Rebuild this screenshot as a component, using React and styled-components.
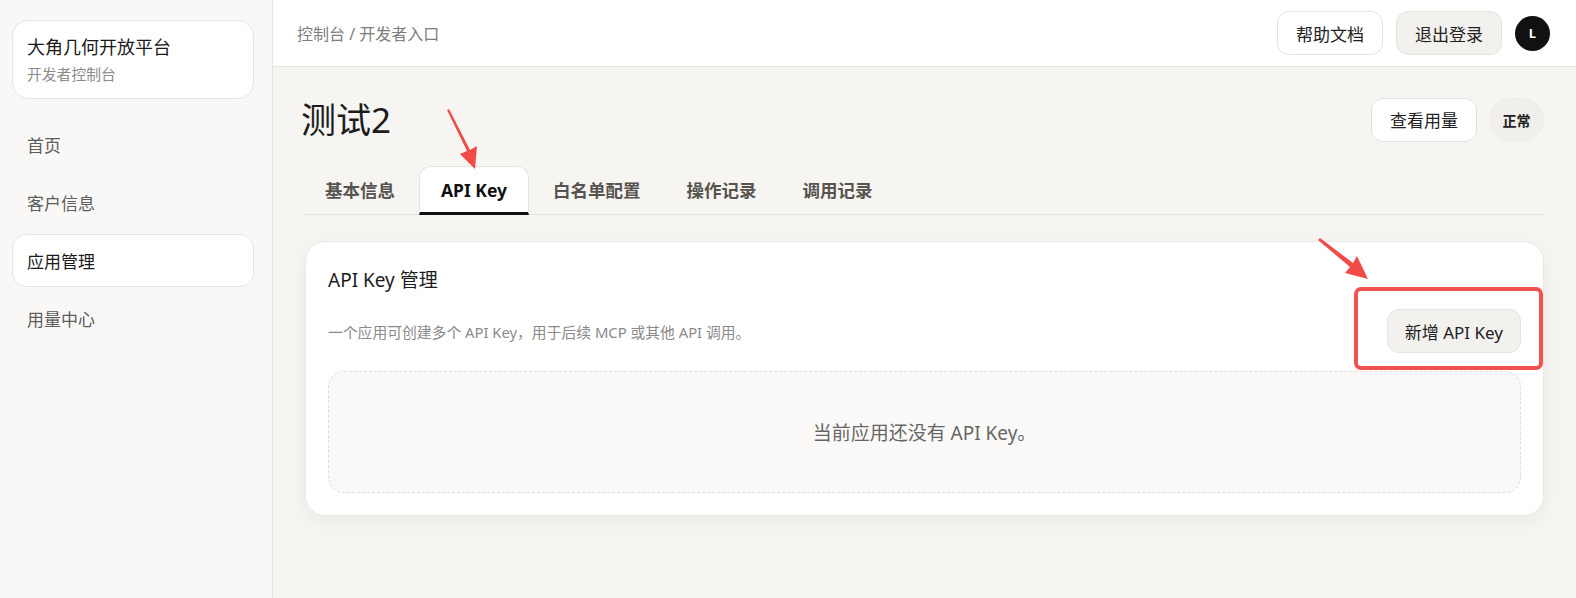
import React from "react";
import styled, { createGlobalStyle } from "styled-components";

const GlobalStyle = createGlobalStyle`
  html, body {
    margin: 0;
    padding: 0;
    background: #f6f5f2;
  }
  body {
    font-family: "Noto Sans", "Noto Sans CJK SC", sans-serif;
    color: #1c1c1c;
  }
  * {
    box-sizing: border-box;
  }
`;

const navItems = ["首页", "客户信息", "应用管理", "用量中心"];
const tabs = ["基本信息", "API Key", "白名单配置", "操作记录", "调用记录"];

export default function App() {
  return (
    <Page>
      <GlobalStyle />
      <Sidebar>
        <Brand>
          <BrandTitle>大角几何开放平台</BrandTitle>
          <BrandSub>开发者控制台</BrandSub>
        </Brand>
        <Nav>
          {navItems.map((item) => (
            <NavItem key={item} $active={item === "应用管理"}>
              {item}
            </NavItem>
          ))}
        </Nav>
      </Sidebar>

      <Main>
        <Header>
          <Crumbs>控制台 / 开发者入口</Crumbs>
          <HeaderActions>
            <Button>帮助文档</Button>
            <Button $muted>退出登录</Button>
            <Avatar>L</Avatar>
          </HeaderActions>
        </Header>

        <Content>
          <TitleRow>
            <PageTitle>测试2</PageTitle>
            <TitleActions>
              <Button>查看用量</Button>
              <Status>正常</Status>
            </TitleActions>
          </TitleRow>

          <Tabs>
            {tabs.map((tab) => (
              <Tab key={tab} $active={tab === "API Key"}>
                {tab}
              </Tab>
            ))}
          </Tabs>

          <Card>
            <CardTitle>API Key 管理</CardTitle>
            <CardRow>
              <CardDesc>
                一个应用可创建多个 API Key，用于后续 MCP 或其他 API 调用。
              </CardDesc>
              <Button $muted>新增 API Key</Button>
            </CardRow>
            <Empty>当前应用还没有 API Key。</Empty>
          </Card>
        </Content>
      </Main>

      {/* red annotation arrows and highlight box */}
      <Arrow style={{ left: 440, top: 106 }} width="46" height="66" viewBox="0 0 46 66">
        <polygon points="7,4 9,3 30,44 37,40 35,63 20,48 27,45" fill="#f04b47" />
      </Arrow>
      <Arrow style={{ left: 1314, top: 234 }} width="60" height="50" viewBox="0 0 60 50">
        <polygon points="4,6 6,4 39,29 43,22 54,45 31,39 36,33" fill="#f04b47" />
      </Arrow>
      <Highlight />
    </Page>
  );
}

const Page = styled.div`
  position: relative;
  display: flex;
  width: 100%;
  height: 598px;
  overflow: hidden;
`;

const Sidebar = styled.aside`
  width: 273px;
  flex-shrink: 0;
  background: #f9f8f6;
  border-right: 1px solid #e8e6e2;
  padding: 20px 18px 0 12px;
`;

const Brand = styled.div`
  background: #ffffff;
  border: 1px solid #e7e5e1;
  border-radius: 16px;
  padding: 13px 14px;
  height: 79px;
`;

const BrandTitle = styled.div`
  font-size: 18px;
  line-height: 26px;
  color: #1a1a1a;
`;

const BrandSub = styled.div`
  margin-top: 4px;
  font-size: 14.8px;
  line-height: 20px;
  color: #8c8c8c;
`;

const Nav = styled.nav`
  display: flex;
  flex-direction: column;
  gap: 5px;
  margin-top: 19px;
`;

const NavItem = styled.div`
  height: 53px;
  display: flex;
  align-items: center;
  padding-left: 14px;
  font-size: 17px;
  border-radius: 14px;
  border: 1px solid ${(p) => (p.$active ? "#e7e5e1" : "transparent")};
  background: ${(p) => (p.$active ? "#ffffff" : "transparent")};
  color: ${(p) => (p.$active ? "#1a1a1a" : "#5c5c5c")};
`;

const Main = styled.div`
  flex: 1;
  display: flex;
  flex-direction: column;
  min-width: 0;
`;

const Header = styled.header`
  height: 67px;
  flex-shrink: 0;
  background: #ffffff;
  border-bottom: 1px solid #e6e4e0;
  display: flex;
  align-items: center;
  justify-content: space-between;
  padding: 0 26px 0 24px;
`;

const Crumbs = styled.div`
  font-size: 16px;
  color: #7d7d7d;
`;

const HeaderActions = styled.div`
  display: flex;
  align-items: center;
  gap: 13px;
`;

const Button = styled.button`
  height: 44px;
  padding: 0 17px;
  min-width: 106px;
  border-radius: 12px;
  border: 1px solid #e5e3df;
  background: ${(p) => (p.$muted ? "#f2f1ee" : "#ffffff")};
  font-family: inherit;
  font-size: 17px;
  color: #222222;
  cursor: pointer;
`;

const Avatar = styled.div`
  width: 35px;
  height: 35px;
  border-radius: 50%;
  background: #111111;
  color: #ffffff;
  font-size: 13px;
  font-weight: 700;
  display: flex;
  align-items: center;
  justify-content: center;
`;

const Content = styled.main`
  padding: 30px 32px 0 32px;
  display: flex;
  flex-direction: column;
`;

const TitleRow = styled.div`
  display: flex;
  align-items: center;
  justify-content: space-between;
`;

const PageTitle = styled.h1`
  margin: 0 0 0 -4px;
  font-size: 35px;
  line-height: 44px;
  font-weight: 400;
  color: #1c1c1c;
`;

const TitleActions = styled.div`
  display: flex;
  align-items: center;
  gap: 12px;
`;

const Status = styled.div`
  width: 55px;
  height: 45px;
  border-radius: 999px;
  background: #f0efec;
  font-size: 14px;
  font-weight: 700;
  color: #222222;
  display: flex;
  align-items: center;
  justify-content: center;
`;

const Tabs = styled.div`
  margin-top: 24px;
  display: flex;
  gap: 2px;
  margin-left: -2px;
  border-bottom: 1px solid #e4e2de;
`;

const Tab = styled.div`
  height: 49px;
  padding: 0 21px;
  display: flex;
  align-items: center;
  margin-bottom: -1px;
  font-size: 17.5px;
  font-weight: 700;
  color: ${(p) => (p.$active ? "#111111" : "#57534e")};
  background: ${(p) => (p.$active ? "#ffffff" : "transparent")};
  border: 1px solid ${(p) => (p.$active ? "#e6e4e0" : "transparent")};
  border-bottom: 3px solid ${(p) => (p.$active ? "#111111" : "transparent")};
  border-radius: 12px 12px 0 0;
`;

const Card = styled.section`
  margin-top: 26px;
  background: #ffffff;
  border: 1px solid #ebe9e5;
  border-radius: 20px;
  box-shadow: 0 6px 22px rgba(0, 0, 0, 0.05);
  padding: 22px;
`;

const CardTitle = styled.h2`
  margin: 0;
  font-size: 19px;
  line-height: 32px;
  font-weight: 400;
  color: #1c1c1c;
`;

const CardRow = styled.div`
  margin-top: 13px;
  display: flex;
  align-items: center;
  justify-content: space-between;
`;

const CardDesc = styled.p`
  margin: 0;
  font-size: 14.8px;
  color: #8a8a8a;
`;

const Empty = styled.div`
  margin-top: 18px;
  height: 122px;
  border: 1px dashed #e0ded9;
  border-radius: 16px;
  background: #faf9f7;
  display: flex;
  align-items: center;
  justify-content: center;
  font-size: 19px;
  color: #666666;
`;

const Arrow = styled.svg`
  position: absolute;
  pointer-events: none;
`;

const Highlight = styled.div`
  position: absolute;
  left: 1354px;
  top: 287px;
  width: 189px;
  height: 83px;
  border: 4px solid #ef5350;
  border-radius: 7px;
  pointer-events: none;
`;
